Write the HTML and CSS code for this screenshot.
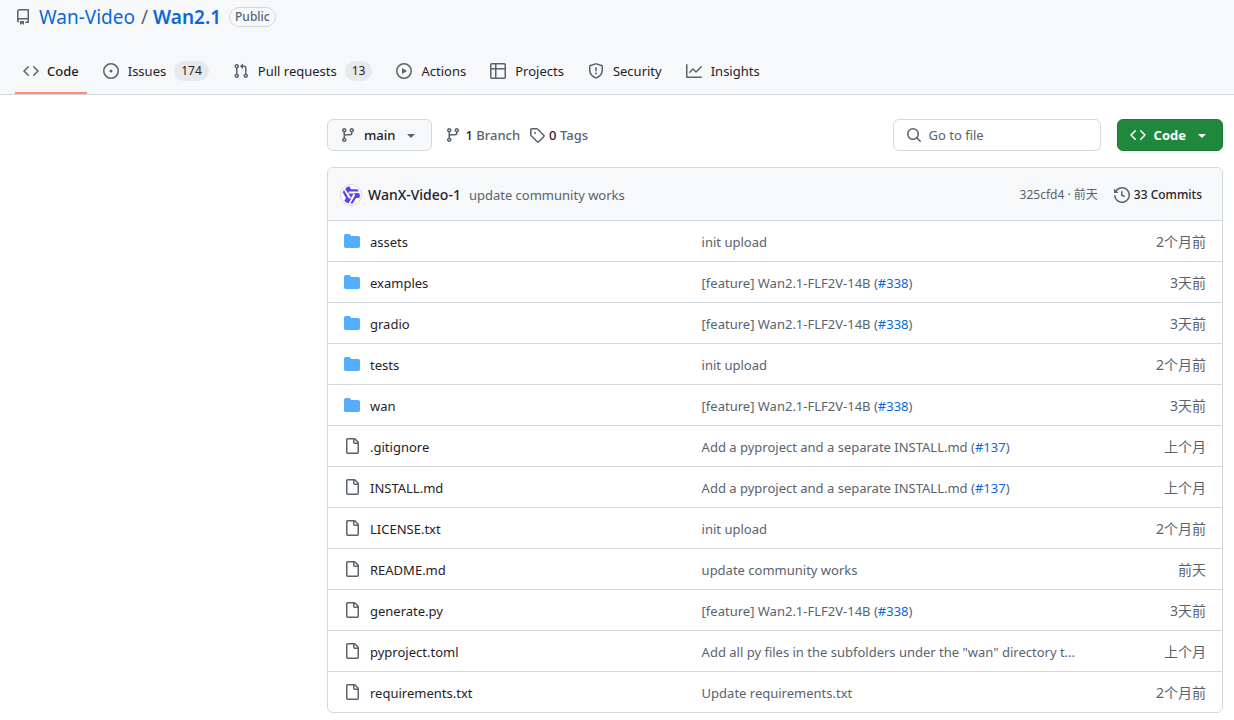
FILE: index.html
```html
<!DOCTYPE html>
<html lang="en">
<head>
<meta charset="utf-8">
<title>Wan-Video/Wan2.1</title>
<link rel="stylesheet" href="styles.css">
</head>
<body>
<svg class="sprite" aria-hidden="true">
  <symbol id="repo" viewBox="0 0 16 16"><path d="M2 2.5A2.5 2.5 0 0 1 4.5 0h8.75a.75.75 0 0 1 .75.75v12.5a.75.75 0 0 1-.75.75h-2.5a.75.75 0 0 1 0-1.5h1.75v-2h-8a1 1 0 0 0-.714 1.7.75.75 0 1 1-1.072 1.05A2.495 2.495 0 0 1 2 11.5Zm10.5-1h-8a1 1 0 0 0-1 1v6.708A2.486 2.486 0 0 1 4.5 9h8ZM5 12.25a.25.25 0 0 1 .25-.25h3.5a.25.25 0 0 1 .25.25v3.25a.25.25 0 0 1-.4.2l-1.45-1.087a.249.249 0 0 0-.3 0L5.4 15.7a.25.25 0 0 1-.4-.2Z"/></symbol>
  <symbol id="code" viewBox="0 0 16 16"><path d="m11.28 3.22 4.25 4.25a.75.75 0 0 1 0 1.06l-4.25 4.25a.749.749 0 0 1-1.275-.326.749.749 0 0 1 .215-.734L13.94 8l-3.72-3.72a.749.749 0 0 1 .326-1.275.749.749 0 0 1 .734.215Zm-6.56 0a.751.751 0 0 1 1.042.018.751.751 0 0 1 .018 1.042L2.06 8l3.72 3.72a.749.749 0 0 1-.326 1.275.749.749 0 0 1-.734-.215L.47 8.53a.75.75 0 0 1 0-1.06Z"/></symbol>
  <symbol id="issue" viewBox="0 0 16 16"><path d="M8 9.5a1.5 1.5 0 1 0 0-3 1.5 1.5 0 0 0 0 3Z"/><path d="M8 0a8 8 0 1 1 0 16A8 8 0 0 1 8 0ZM1.5 8a6.5 6.5 0 1 0 13 0 6.5 6.5 0 0 0-13 0Z"/></symbol>
  <symbol id="pull" viewBox="0 0 16 16"><path d="M1.5 3.25a2.25 2.25 0 1 1 3 2.122v5.256a2.251 2.251 0 1 1-1.5 0V5.372A2.25 2.25 0 0 1 1.5 3.25Zm5.677-.177L9.573.677A.25.25 0 0 1 10 .854V2.5h1A2.5 2.5 0 0 1 13.5 5v5.628a2.251 2.251 0 1 1-1.5 0V5a1 1 0 0 0-1-1h-1v1.646a.25.25 0 0 1-.427.177L7.177 3.427a.25.25 0 0 1 0-.354ZM3.75 2.5a.75.75 0 1 0 0 1.5.75.75 0 0 0 0-1.5Zm0 9.5a.75.75 0 1 0 0 1.5.75.75 0 0 0 0-1.5Zm8.25.75a.75.75 0 1 0 1.5 0 .75.75 0 0 0-1.5 0Z"/></symbol>
  <symbol id="play" viewBox="0 0 16 16"><path d="M8 0a8 8 0 1 1 0 16A8 8 0 0 1 8 0ZM1.5 8a6.5 6.5 0 1 0 13 0 6.5 6.5 0 0 0-13 0Zm4.879-2.773 4.264 2.559a.25.25 0 0 1 0 .428l-4.264 2.559A.25.25 0 0 1 6 10.559V5.442a.25.25 0 0 1 .379-.215Z"/></symbol>
  <symbol id="table" viewBox="0 0 16 16"><path d="M0 1.75C0 .784.784 0 1.75 0h12.5C15.216 0 16 .784 16 1.75v12.5A1.75 1.75 0 0 1 14.25 16H1.75A1.75 1.75 0 0 1 0 14.25ZM6.5 6.5v8h7.75a.25.25 0 0 0 .25-.25V6.5Zm8-1.5V1.75a.25.25 0 0 0-.25-.25H6.5V5Zm-13 1.5v7.75c0 .138.112.25.25.25H5v-8ZM5 5V1.5H1.75a.25.25 0 0 0-.25.25V5Z"/></symbol>
  <symbol id="shield" viewBox="0 0 16 16"><path d="M7.467.133a1.748 1.748 0 0 1 1.066 0l5.25 1.68A1.75 1.75 0 0 1 15 3.48V7c0 1.566-.32 3.182-1.303 4.682-.983 1.498-2.585 2.813-5.032 3.855a1.697 1.697 0 0 1-1.33 0c-2.447-1.042-4.049-2.357-5.032-3.855C1.32 10.182 1 8.566 1 7V3.48a1.75 1.75 0 0 1 1.217-1.667Zm.61 1.429a.25.25 0 0 0-.153 0l-5.25 1.68a.25.25 0 0 0-.174.238V7c0 1.358.275 2.666 1.057 3.86.784 1.194 2.121 2.34 4.366 3.297a.196.196 0 0 0 .154 0c2.245-.956 3.582-2.104 4.366-3.298C13.225 9.666 13.5 8.36 13.5 7V3.48a.251.251 0 0 0-.174-.237l-5.25-1.68ZM8.75 4.75v3a.75.75 0 0 1-1.5 0v-3a.75.75 0 0 1 1.5 0ZM9 10.5a1 1 0 1 1-2 0 1 1 0 0 1 2 0Z"/></symbol>
  <symbol id="graph" viewBox="0 0 16 16"><path d="M1.5 1.75V13.5h13.75a.75.75 0 0 1 0 1.5H.75a.75.75 0 0 1-.75-.75V1.75a.75.75 0 0 1 1.5 0Zm14.28 2.53-5.25 5.25a.75.75 0 0 1-1.06 0L7 7.06 4.28 9.78a.751.751 0 0 1-1.042-.018.751.751 0 0 1-.018-1.042l3.25-3.25a.75.75 0 0 1 1.06 0L10 7.94l4.72-4.72a.751.751 0 0 1 1.042.018.751.751 0 0 1 .018 1.042Z"/></symbol>
  <symbol id="branch" viewBox="0 0 16 16"><path d="M9.5 3.25a2.25 2.25 0 1 1 3 2.122V6A2.5 2.5 0 0 1 10 8.5H6a1 1 0 0 0-1 1v1.128a2.251 2.251 0 1 1-1.5 0V5.372a2.25 2.25 0 1 1 1.5 0v1.836A2.493 2.493 0 0 1 6 7h4a1 1 0 0 0 1-1v-.628A2.25 2.25 0 0 1 9.5 3.25Zm-6 0a.75.75 0 1 0 1.5 0 .75.75 0 0 0-1.5 0Zm8.25-.75a.75.75 0 1 0 0 1.5.75.75 0 0 0 0-1.5ZM4.25 12a.75.75 0 1 0 0 1.5.75.75 0 0 0 0-1.5Z"/></symbol>
  <symbol id="tag" viewBox="0 0 16 16"><path d="M1 7.775V2.75C1 1.784 1.784 1 2.75 1h5.025c.464 0 .91.184 1.238.513l6.25 6.25a1.75 1.75 0 0 1 0 2.474l-5.026 5.026a1.75 1.75 0 0 1-2.474 0l-6.25-6.25A1.752 1.752 0 0 1 1 7.775Zm1.5 0c0 .066.026.13.073.177l6.25 6.25a.25.25 0 0 0 .354 0l5.025-5.025a.25.25 0 0 0 0-.354l-6.25-6.25a.25.25 0 0 0-.177-.073H2.75a.25.25 0 0 0-.25.25ZM6 5a1 1 0 1 1 0 2 1 1 0 0 1 0-2Z"/></symbol>
  <symbol id="search" viewBox="0 0 16 16"><path d="M10.68 11.74a6 6 0 0 1-7.922-8.982 6 6 0 0 1 8.982 7.922l3.04 3.04a.749.749 0 0 1-.326 1.275.749.749 0 0 1-.734-.215ZM11.5 7a4.499 4.499 0 1 0-8.997 0A4.499 4.499 0 0 0 11.5 7Z"/></symbol>
  <symbol id="caret" viewBox="0 0 16 16"><path d="m4.427 7.427 3.396 3.396a.25.25 0 0 0 .354 0l3.396-3.396A.25.25 0 0 0 11.396 7H4.604a.25.25 0 0 0-.177.427Z"/></symbol>
  <symbol id="history" viewBox="0 0 16 16"><path d="m.427 1.927 1.215 1.215a8.002 8.002 0 1 1-1.6 5.685.75.75 0 1 1 1.493-.154 6.5 6.5 0 1 0 1.18-4.458l1.358 1.358A.25.25 0 0 1 3.896 6H.25A.25.25 0 0 1 0 5.75V2.104a.25.25 0 0 1 .427-.177ZM7.75 4a.75.75 0 0 1 .75.75v2.992l2.028.812a.75.75 0 0 1-.557 1.392l-2.5-1A.751.751 0 0 1 7 8.25v-3.5A.75.75 0 0 1 7.75 4Z"/></symbol>
  <symbol id="folder" viewBox="0 0 16 16"><path d="M1.75 1A1.75 1.75 0 0 0 0 2.75v10.5C0 14.216.784 15 1.75 15h12.5A1.75 1.75 0 0 0 16 13.25v-8.5A1.75 1.75 0 0 0 14.25 3H7.5a.25.25 0 0 1-.2-.1l-.9-1.2C6.07 1.26 5.55 1 5 1H1.75Z"/></symbol>
  <symbol id="file" viewBox="0 0 16 16"><path d="M2 1.75C2 .784 2.784 0 3.75 0h6.586c.464 0 .909.184 1.237.513l2.914 2.914c.329.328.513.773.513 1.237v9.586A1.75 1.75 0 0 1 13.25 16h-9.5A1.75 1.75 0 0 1 2 14.25Zm1.75-.25a.25.25 0 0 0-.25.25v12.5c0 .138.112.25.25.25h9.5a.25.25 0 0 0 .25-.25V6h-2.75A1.75 1.75 0 0 1 9 4.25V1.5Zm6.75.062V4.25c0 .138.112.25.25.25h2.688l-.011-.013-2.914-2.914-.013-.011Z"/></symbol>
  <symbol id="avatar" viewBox="0 0 22 22">
    <circle cx="11" cy="11" r="10.5" fill="#fff" stroke="#d1d9e0"/>
    <g fill="#6240ea">
      <path d="M6.600 3.200 9.300 2.300 11 5.200H17.600L18.800 7.400H9.200L8 9.400 5.200 5.200Z"/>
      <path d="M6.600 3.200 9.300 2.300 11 5.200H17.600L18.800 7.400H9.200L8 9.400 5.200 5.200Z" transform="rotate(120 11 11)"/>
      <path d="M6.600 3.200 9.300 2.300 11 5.200H17.600L18.800 7.400H9.200L8 9.400 5.200 5.200Z" transform="rotate(240 11 11)"/>
      <path d="M8.400 9.500h5.200L11 14Z"/>
    </g>
  </symbol>
</svg>

<header class="header">
  <div class="title">
    <svg class="icon"><use href="#repo"/></svg>
    <h1 class="repo"><a href="#owner">Wan-Video</a><span class="slash">/</span><a class="repo-name" href="#repo-home">Wan2.1</a></h1>
    <span class="label">Public</span>
  </div>
  <nav class="tabs" aria-label="Repository">
    <a class="tab active" href="#code-tab"><svg class="icon"><use href="#code"/></svg>Code</a>
    <a class="tab" href="#issues"><svg class="icon"><use href="#issue"/></svg>Issues<span class="count">174</span></a>
    <a class="tab" href="#pulls"><svg class="icon"><use href="#pull"/></svg>Pull requests<span class="count">13</span></a>
    <a class="tab" href="#actions"><svg class="icon"><use href="#play"/></svg>Actions</a>
    <a class="tab" href="#projects"><svg class="icon"><use href="#table"/></svg>Projects</a>
    <a class="tab" href="#security"><svg class="icon"><use href="#shield"/></svg>Security</a>
    <a class="tab" href="#insights"><svg class="icon"><use href="#graph"/></svg>Insights</a>
  </nav>
</header>

<main class="main">
  <div class="toolbar">
    <button class="btn" type="button"><svg class="icon"><use href="#branch"/></svg>main<svg class="icon"><use href="#caret"/></svg></button>
    <div class="refs">
      <a class="ref" href="#branches"><svg class="icon"><use href="#branch"/></svg><span><b>1</b> Branch</span></a>
      <a class="ref" href="#tags"><svg class="icon"><use href="#tag"/></svg><span><b>0</b> Tags</span></a>
    </div>
    <label class="search"><svg class="icon"><use href="#search"/></svg><input type="text" placeholder="Go to file" aria-label="Go to file"></label>
    <button class="btn primary" type="button"><svg class="icon"><use href="#code"/></svg>Code<svg class="icon"><use href="#caret"/></svg></button>
  </div>

  <section class="box">
    <div class="commit">
      <svg class="avatar"><use href="#avatar"/></svg>
      <a class="author" href="#author">WanX-Video-1</a>
      <a class="summary" href="#commit">update community works</a>
      <span class="stamp">325cfd4 · 前天</span>
      <a class="commits" href="#commits"><svg class="icon"><use href="#history"/></svg>33 Commits</a>
    </div>
    <table class="files">
      <colgroup><col class="col-name"><col><col class="col-age"></colgroup>
      <tbody>
        <tr><td><a class="name" href="#f1"><svg class="icon folder"><use href="#folder"/></svg>assets</a></td><td>init upload</td><td>2个月前</td></tr>
        <tr><td><a class="name" href="#f2"><svg class="icon folder"><use href="#folder"/></svg>examples</a></td><td>[feature] Wan2.1-FLF2V-14B (<a href="#338">#338</a>)</td><td>3天前</td></tr>
        <tr><td><a class="name" href="#f3"><svg class="icon folder"><use href="#folder"/></svg>gradio</a></td><td>[feature] Wan2.1-FLF2V-14B (<a href="#338">#338</a>)</td><td>3天前</td></tr>
        <tr><td><a class="name" href="#f4"><svg class="icon folder"><use href="#folder"/></svg>tests</a></td><td>init upload</td><td>2个月前</td></tr>
        <tr><td><a class="name" href="#f5"><svg class="icon folder"><use href="#folder"/></svg>wan</a></td><td>[feature] Wan2.1-FLF2V-14B (<a href="#338">#338</a>)</td><td>3天前</td></tr>
        <tr><td><a class="name" href="#f6"><svg class="icon"><use href="#file"/></svg>.gitignore</a></td><td>Add a pyproject and a separate INSTALL.md (<a href="#137">#137</a>)</td><td>上个月</td></tr>
        <tr><td><a class="name" href="#f7"><svg class="icon"><use href="#file"/></svg>INSTALL.md</a></td><td>Add a pyproject and a separate INSTALL.md (<a href="#137">#137</a>)</td><td>上个月</td></tr>
        <tr><td><a class="name" href="#f8"><svg class="icon"><use href="#file"/></svg>LICENSE.txt</a></td><td>init upload</td><td>2个月前</td></tr>
        <tr><td><a class="name" href="#f9"><svg class="icon"><use href="#file"/></svg>README.md</a></td><td>update community works</td><td>前天</td></tr>
        <tr><td><a class="name" href="#f10"><svg class="icon"><use href="#file"/></svg>generate.py</a></td><td>[feature] Wan2.1-FLF2V-14B (<a href="#338">#338</a>)</td><td>3天前</td></tr>
        <tr><td><a class="name" href="#f11"><svg class="icon"><use href="#file"/></svg>pyproject.toml</a></td><td>Add all py files in the subfolders under the "wan" directory t...</td><td>上个月</td></tr>
        <tr><td><a class="name" href="#f12"><svg class="icon"><use href="#file"/></svg>requirements.txt</a></td><td>Update requirements.txt</td><td>2个月前</td></tr>
      </tbody>
    </table>
  </section>
</main>
</body>
</html>
```
FILE: styles.css
```css
* { box-sizing: border-box; }

body {
  margin: 0;
  background: #fff;
  color: #1f2328;
  font: 13px/20px "Noto Sans", "Noto Sans CJK SC", sans-serif;
}

a { color: #0969da; text-decoration: none; }
button, input { font: inherit; }

.sprite { position: absolute; width: 0; height: 0; }
.icon { flex: none; width: 16px; height: 16px; fill: #59636e; }

.header {
  background: #f6f8fa;
  border-bottom: 1px solid #d1d9e0;
}

.title {
  display: flex;
  align-items: center;
  height: 34px;
  padding-left: 15px;
  gap: 8px;
}
.repo { margin: 0; font-size: 19px; line-height: 30px; font-weight: 400; }
.slash { margin: 0 5px 0 6px; color: #59636e; }
.repo-name { font-weight: 600; }
.label {
  padding: 0 5px;
  border: 1px solid #d1d9e0;
  border-radius: 20px;
  color: #59636e;
  font-size: 12px;
  font-weight: 500;
  line-height: 18px;
}

.tabs { display: flex; gap: 8px; padding: 14px 15px 0; }
.tab {
  display: flex;
  align-items: center;
  gap: 9px;
  height: 46px;
  padding: 2px 8px 0;
  border-bottom: 2px solid transparent;
  color: #1f2328;
  white-space: nowrap;
}
.tab.active { gap: 8px; border-color: #fd8c73; font-weight: 500; }
.count {
  margin-left: -1px;
  padding: 0 7px;
  border-radius: 20px;
  background: #e7eaed;
  font-size: 12px;
  font-weight: 400;
}

.main { margin-left: 327px; padding: 24px 11px 7px 0; }

.toolbar { display: flex; align-items: center; margin-bottom: 16px; }
.btn {
  display: flex;
  align-items: center;
  gap: 8px;
  height: 32px;
  padding: 0 12px;
  border: 1px solid #d1d9e0;
  border-radius: 6px;
  background: #f6f8fa;
  color: #1f2328;
  font-weight: 500;
}
.primary { border-color: #1c7a37; background: #1f883d; color: #fff; font-weight: 700; }
.primary .icon { fill: #fff; }
.refs { display: flex; gap: 9px; margin: 0 auto 0 13px; }
.ref { display: flex; align-items: center; gap: 4px; color: #59636e; font-weight: 500; }
.ref b { color: #1f2328; font-weight: 500; }

.search {
  display: flex;
  align-items: center;
  gap: 7px;
  width: 208px;
  height: 32px;
  margin-right: 16px;
  padding: 0 12px;
  border: 1px solid #d1d9e0;
  border-radius: 6px;
}
.search input { flex: 1; min-width: 0; padding: 0; border: 0; outline: 0; background: none; }
.search input::placeholder { color: #59636e; opacity: 1; }

.box { border: 1px solid #d1d9e0; border-radius: 6px; overflow: hidden; }
.commit {
  display: flex;
  align-items: center;
  gap: 8px;
  height: 52px;
  padding: 2px 20px 0 12px;
  background: #f6f8fa;
}
.avatar { width: 22px; height: 22px; margin-right: -2px; }
.author { color: #1f2328; font-size: 14px; font-weight: 500; }
.summary { color: #59636e; }
.stamp { margin: 0 8px 0 auto; color: #59636e; font-size: 12px; }
.commits { display: flex; align-items: center; gap: 4px; color: #1f2328; font-size: 12px; font-weight: 500; }

.files { width: 100%; border-spacing: 0; table-layout: fixed; }
.col-name { width: 40%; }
.col-age { width: 128px; }
.files td {
  height: 41px;
  padding: 2px 0 0 16px;
  border-top: 1px solid #d1d9e0;
  color: #59636e;
  white-space: nowrap;
}
.files td:last-child { padding: 2px 16px 0 0; font-size: 14px; text-align: right; }
.name { display: flex; align-items: center; gap: 10px; color: #1f2328; }
.name .icon { margin-bottom: 2px; }
.icon.folder { fill: #54aeff; }
```
